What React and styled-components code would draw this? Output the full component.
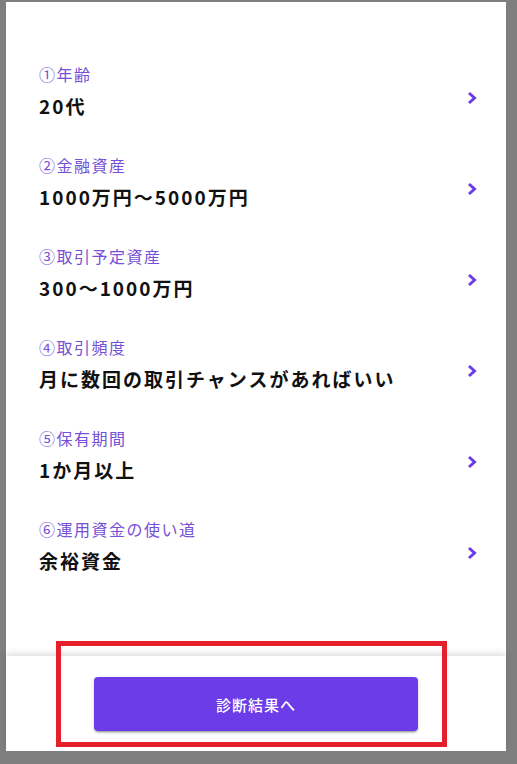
import React from 'react';
import styled, { createGlobalStyle } from 'styled-components';

const GlobalStyle = createGlobalStyle`
  html, body {
    margin: 0;
    padding: 0;
    background: #7f7f7f;
    font-family: "Noto Sans CJK JP", "Noto Sans", sans-serif;
  }
`;

const items = [
  { label: '①年齢', value: '20代' },
  { label: '②金融資産', value: '1000万円〜5000万円' },
  { label: '③取引予定資産', value: '300〜1000万円' },
  { label: '④取引頻度', value: '月に数回の取引チャンスがあればいい' },
  { label: '⑤保有期間', value: '1か月以上' },
  { label: '⑥運用資金の使い道', value: '余裕資金' },
];

const Page = styled.div`
  padding: 2px 11px 0 6px;
  height: 764px;
  box-sizing: border-box;
`;

const Panel = styled.div`
  position: relative;
  width: 500px;
  height: 749px;
  background: #fff;
  display: flex;
  flex-direction: column;
`;

const List = styled.ul`
  flex: 1;
  list-style: none;
  margin: 0;
  padding: 62px 29px 0 33px;
`;

const Row = styled.li`
  display: flex;
  justify-content: space-between;
  align-items: flex-start;
  height: 91px;
  cursor: pointer;
`;

const Texts = styled.div`
  display: flex;
  flex-direction: column;
`;

const Label = styled.span`
  font-size: 16px;
  line-height: 20px;
  letter-spacing: 1.5px;
  color: #7650d6;
  margin-bottom: 8px;
`;

const Value = styled.span`
  font-size: 19px;
  line-height: 28px;
  font-weight: 700;
  letter-spacing: 2px;
  color: #111;
`;

const Chevron = styled.svg`
  width: 10px;
  height: 14px;
  margin-top: 27px;
  flex-shrink: 0;
`;

const Footer = styled.div`
  height: 95px;
  display: flex;
  justify-content: center;
  padding-top: 21px;
  box-sizing: border-box;
  box-shadow: 0 -3px 6px rgba(0, 0, 0, 0.12);
  background: #fff;
`;

const Button = styled.button`
  width: 324px;
  height: 54px;
  border: none;
  border-radius: 4px;
  background: #6b3ce8;
  color: #fff;
  font-family: "Noto Sans CJK JP", "Noto Sans", sans-serif;
  font-size: 15px;
  font-weight: 500;
  letter-spacing: 1px;
  cursor: pointer;
  box-shadow: 0 3px 1px -2px rgba(0, 0, 0, 0.2), 0 2px 2px 0 rgba(0, 0, 0, 0.14),
    0 1px 5px 0 rgba(0, 0, 0, 0.12);
`;

const Highlight = styled.div`
  position: absolute;
  left: 50px;
  top: 639px;
  width: 391px;
  height: 106px;
  box-sizing: border-box;
  border: 5px solid #e5202a;
  pointer-events: none;
`;

function ChevronIcon() {
  return (
    <Chevron viewBox="0 0 10 14">
      <polyline points="2,2 7.5,7 2,12" fill="none" stroke="#6b3ce8" strokeWidth="3" />
    </Chevron>
  );
}

export default function App() {
  return (
    <>
      <GlobalStyle />
      <Page>
        <Panel>
          <List>
            {items.map(item => (
              <Row key={item.label}>
                <Texts>
                  <Label>{item.label}</Label>
                  <Value>{item.value}</Value>
                </Texts>
                <ChevronIcon />
              </Row>
            ))}
          </List>
          <Footer>
            <Button>診断結果へ</Button>
          </Footer>
          <Highlight />
        </Panel>
      </Page>
    </>
  );
}
